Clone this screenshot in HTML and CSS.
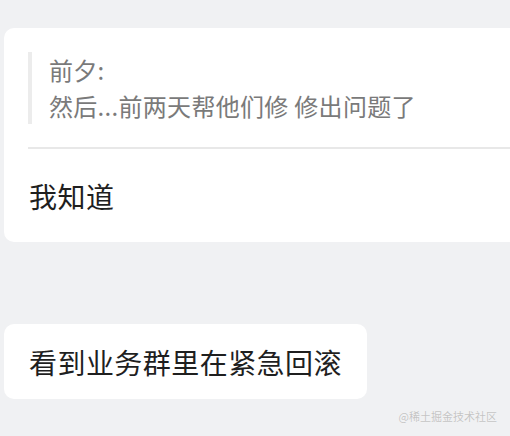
FILE: index.html
```html
<!DOCTYPE html>
<html lang="zh">
<head>
<meta charset="utf-8">
<link rel="stylesheet" href="styles.css">
</head>
<body>
<div class="page">
  <div class="card card-wide">
    <div class="quote">
      <div class="quote-line">前夕:</div>
      <div class="quote-line">然后...前两天帮他们修 修出问题了</div>
    </div>
    <div class="divider"></div>
    <div class="msg">我知道</div>
  </div>
  <div class="card card-short">
    <div class="msg">看到业务群里在紧急回滚</div>
  </div>
  <div class="watermark">@稀土掘金技术社区</div>
</div>
</body>
</html>
```
FILE: styles.css
```css
html, body {
  margin: 0;
  padding: 0;
  background: #f0f1f3;
  overflow: hidden;
}
.page {
  width: 510px;
  height: 436px;
  padding-top: 28px;
  box-sizing: border-box;
  font-family: "Noto Sans CJK SC", "Noto Sans", sans-serif;
  display: flex;
  flex-direction: column;
  align-items: flex-start;
}
.card {
  background: #ffffff;
  border-radius: 10px;
  margin-left: 4px;
  box-sizing: border-box;
}
.card-wide {
  width: 530px;
  height: 214px;
  padding: 24px 0 0 24px;
}
.quote {
  border-left: 4px solid #ececec;
  padding-left: 17px;
  color: #7a7a7a;
  font-size: 24px;
  line-height: 36px;
  letter-spacing: 0.3px;
}
.quote-line {
  white-space: nowrap;
}
.divider {
  height: 2px;
  background: #e8e8e8;
  margin-top: 23px;
}
.msg {
  font-size: 28px;
  line-height: 40px;
  color: #1f1f1f;
  white-space: nowrap;
  letter-spacing: 0.45px;
}
.card-wide .msg {
  margin-top: 27px;
  margin-left: 1px;
}
.card-short {
  margin-top: 82px;
  padding: 18px 25px 17px 25px;
}
.watermark {
  align-self: flex-end;
  margin-right: 13px;
  margin-top: 10px;
  font-size: 11px;
  line-height: 14px;
  color: #c4c4c4;
  text-shadow: 0 0 1px #ffffff;
}
```
